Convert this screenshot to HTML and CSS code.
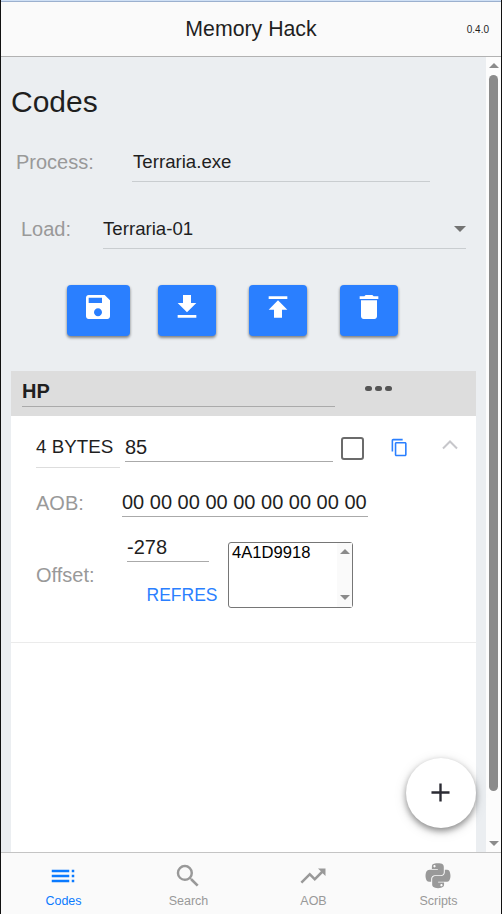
FILE: index.html
```html
<!DOCTYPE html>
<html lang="en">
<head>
<meta charset="utf-8">
<title>Memory Hack</title>
<link rel="stylesheet" href="styles.css">
</head>
<body>
<div class="app">
  <header class="toolbar">
    <span></span>
    <span class="title">Memory Hack</span>
    <span class="version">0.4.0</span>
  </header>
  <div class="viewport">
    <main class="content">
      <h1>Codes</h1>
      <div class="row process">
        <span class="label">Process:</span>
        <div class="field">Terraria.exe</div>
      </div>
      <div class="row load">
        <span class="label">Load:</span>
        <div class="field">Terraria-01<i class="caret"></i></div>
      </div>
      <div class="actions">
        <button class="action wide"><svg viewBox="0 0 24 24"><path d="M17 3H5c-1.11 0-2 .9-2 2v14c0 1.1.89 2 2 2h14c1.1 0 2-.9 2-2V7l-4-4zm-5 16c-1.66 0-3-1.34-3-3s1.34-3 3-3 3 1.34 3 3-1.34 3-3 3zm3-10H5V5h10v4z"/></svg></button>
        <button class="action"><svg viewBox="0 0 24 24"><path d="M19 9h-4V3H9v6H5l7 7 7-7zM5 18v2h14v-2H5z"/></svg></button>
        <button class="action"><svg viewBox="0 0 24 24"><path d="M5 4v2h14V4H5zm0 10h4v6h6v-6h4l-7-7-7 7z"/></svg></button>
        <button class="action"><svg viewBox="0 0 24 24"><path d="M6 19c0 1.100.9 2 2 2h8c1.100 0 2-.9 2-2V7H6v12zM19 4h-3.500l-1-1h-5l-1 1H5v2h14V4z"/></svg></button>
      </div>
      <section class="card">
        <div class="card-head">
          <div class="name">HP</div>
          <div class="dots"><i></i><i></i><i></i></div>
        </div>
        <div class="card-body">
          <div class="value-row">
            <div class="type">4 BYTES</div>
            <div class="value">85</div>
            <span class="check"></span>
            <svg class="copy" viewBox="0 0 24 24"><path d="M16 1H4c-1.100 0-2 .9-2 2v14h2V3h12V1zm3 4H8c-1.100 0-2 .9-2 2v14c0 1.100.9 2 2 2h11c1.100 0 2-.9 2-2V7c0-1.100-.9-2-2-2zm0 16H8V7h11v14z"/></svg>
            <svg class="chevron" viewBox="0 0 16 10"><path d="M1 8.500L8 1.500l7 7"/></svg>
          </div>
          <div class="aob-row">
            <span class="label">AOB:</span>
            <div class="bytes">00 00 00 00 00 00 00 00 00</div>
          </div>
          <div class="offset-row">
            <span class="label">Offset:</span>
            <div class="offset-edit">
              <div class="offset">-278</div>
              <div class="refresh">REFRES</div>
            </div>
            <div class="listbox">
              <span class="option">4A1D9918</span>
              <div class="list-scroll"><i class="up"></i><i class="down"></i></div>
            </div>
          </div>
        </div>
      </section>
    </main>
    <div class="scrollbar"><i class="up"></i><div class="thumb"></div><i class="down"></i></div>
    <button class="fab"><svg viewBox="0 0 20 20"><path d="M10 .5v19M.5 10h19"/></svg></button>
  </div>
  <nav class="tabs">
    <div class="tab active"><svg viewBox="0 0 24 24"><path d="M3 9h14V7H3v2zm0 4h14v-2H3v2zm0 4h14v-2H3v2zm16 0h2v-2h-2v2zm0-10v2h2V7h-2zm0 6h2v-2h-2v2z"/></svg><span>Codes</span></div>
    <div class="tab"><svg viewBox="0 0 24 24"><path d="M15.500 14h-.79l-.28-.27A6.471 6.471 0 0 0 16 9.500 6.500 6.500 0 1 0 9.500 16c1.610 0 3.090-.59 4.230-1.570l.27.28v.79l5 4.990L20.490 19l-4.990-5zm-6 0C7.010 14 5 11.990 5 9.500S7.010 5 9.500 5 14 7.010 14 9.500 11.990 14 9.500 14z"/></svg><span>Search</span></div>
    <div class="tab"><svg viewBox="0 0 24 24"><path d="M16 6l2.290 2.290-4.880 4.880-4-4L2 16.590 3.410 18l6-6 4 4 6.300-6.290L22 12V6z"/></svg><span>AOB</span></div>
    <div class="tab"><svg viewBox="-45 -9 538 538"><path d="M439.8 200.5c-7.7-30.9-22.3-54.2-53.4-54.2h-40.1v47.4c0 36.8-31.2 67.8-66.800 67.800H172.700c-29.200 0-53.400 25-53.400 54.300v101.800c0 29 25.200 46 53.400 54.300 33.800 9.900 66.300 11.700 106.800 0 26.900-7.800 53.400-23.500 53.400-54.300v-40.700H226.200v-13.600h160.200c31.100 0 42.600-21.700 53.400-54.200 11.200-33.500 10.700-65.700 0-108.600zM286.200 404c11.100 0 20.100 9.100 20.100 20.300 0 11.300-9 20.400-20.100 20.400-11 0-20.100-9.200-20.100-20.400.1-11.300 9.100-20.300 20.100-20.300zM167.800 248.100h106.800c29.700 0 53.400-24.500 53.400-54.300V91.900c0-29-24.400-50.700-53.400-55.600-35.800-5.900-74.700-5.600-106.800.1-45.200 8-53.400 24.700-53.400 55.600v40.700h106.900v13.600h-147c-31.100 0-58.300 18.700-66.800 54.200-9.800 40.700-10.200 66.100 0 108.600 7.600 31.600 25.700 54.200 56.800 54.200H101v-48.800c0-35.300 30.500-66.400 66.800-66.400zm-6.700-142.600c-11.100 0-20.100-9.100-20.100-20.300.1-11.300 9-20.400 20.100-20.400 11 0 20.100 9.200 20.100 20.400s-9 20.300-20.100 20.300z"/></svg><span>Scripts</span></div>
  </nav>
</div>
</body>
</html>
```
FILE: styles.css
```css
* { box-sizing: border-box; }
body {
  margin: 0;
  font-family: "Liberation Sans", Arial, sans-serif;
  font-size: 20px;
  color: #1f1f1f;
  overflow: hidden;
}
svg { display: block; fill: currentColor; }
button { border: 0; padding: 0; font: inherit; }
.app {
  height: 914px;
  display: flex;
  flex-direction: column;
  background: #fafafa;
  border-left: 1px solid #111;
  border-right: 1px solid #111;
}
.toolbar {
  height: 57px;
  flex: none;
  display: grid;
  grid-template-columns: 1fr auto 1fr;
  border-top: 1px solid #cfe0f5;
  border-bottom: 1px solid #b2b2b2;
  box-shadow: inset 0 1px #9bb0ce;
  line-height: 57px;
}
.title { font-size: 21.3px; }
.version {
  font-size: 10px;
  text-align: right;
  padding-right: 12px;
}
.viewport {
  height: 795px;
  flex: none;
  display: flex;
  position: relative;
}
.content {
  width: 485px;
  padding: 25px 10px 0;
  background: #ebeef1;
  display: flex;
  flex-direction: column;
}
h1 {
  margin: 0;
  font-size: 30px;
  font-weight: 400;
  line-height: 40px;
}
.label { color: #999; }
.row { display: grid; height: 40px; line-height: 40px; }
.row .field {
  display: flex;
  justify-content: space-between;
  align-items: center;
  font-size: 18.67px;
  line-height: 38px;
  border-bottom: 1px solid #c9cdd0;
}
.process {
  margin: 20px 46px 0 5px;
  grid-template-columns: 116px 1fr;
}
.process .field { padding-left: 1px; }
.load {
  margin: 27px 10px 0 10px;
  grid-template-columns: 82px 1fr;
}
.load .field { padding-top: 1px; }
.caret {
  border: 6.5px solid transparent;
  border-top: 6px solid #737373;
  border-bottom: 0;
}
.actions {
  display: flex;
  gap: 33px;
  margin: 36px 0 35px 56px;
}
.action {
  width: 58px;
  height: 51px;
  padding: 6px 1px 13px 0;
  display: flex;
  justify-content: center;
  color: #fff;
  background: #2a7fff;
  border-radius: 4px;
  box-shadow: 0 2px 3px rgba(0,0,0,.35), 0 1px 3px rgba(0,0,0,.2);
}
.action.wide { width: 63px; margin-right: -5px; }
.action svg { width: 32px; height: 32px; }
.card { flex: 1; background: #fff; }
.card-head {
  height: 45px;
  padding-left: 11px;
  display: flex;
  background: #ddd;
}
.name {
  width: 313px;
  height: 36px;
  line-height: 40px;
  font-weight: 700;
  border-bottom: 1px solid #aaa;
}
.dots { display: flex; gap: 3px; margin: 15px 0 0 30px; }
.dots i { width: 7px; height: 5px; border-radius: 2.5px; background: #555; }
.card-body {
  height: 227px;
  padding-left: 25px;
  border-bottom: 1px solid #ebebeb;
}
.value-row { display: flex; height: 62px; }
.type {
  width: 84px;
  height: 52px;
  font-size: 18.8px;
  line-height: 62px;
  white-space: nowrap;
  border-bottom: 1px solid #ddd;
}
.value {
  width: 208px;
  height: 46px;
  margin-left: 5px;
  line-height: 62px;
  border-bottom: 1px solid #aaa;
}
.check {
  width: 23px;
  height: 23px;
  margin: 21px 0 0 8px;
  border: 2px solid #6b6b6b;
  border-radius: 3px;
}
.copy { width: 19px; height: 19px; margin: 22px 0 0 25.5px; color: #2a7fff; }
.chevron {
  width: 16px;
  height: 10px;
  margin: 24px 0 0 33px;
  fill: none;
  stroke: #c7c7cb;
  stroke-width: 2;
}
.aob-row { display: flex; height: 60px; }
.aob-row .label { width: 86px; line-height: 50px; }
.bytes {
  width: 246px;
  height: 39px;
  line-height: 48px;
  white-space: nowrap;
  border-bottom: 1px solid #aaa;
}
.offset-row { display: flex; }
.offset-row .label { width: 91px; line-height: 74px; }
.offset-edit { width: 101px; }
.offset {
  width: 82px;
  height: 24px;
  line-height: 18px;
  border-bottom: 1px solid #aaa;
}
.refresh {
  margin: 18px 0 0 19.5px;
  font-size: 17.5px;
  line-height: 30px;
  color: #2a7fff;
}
.listbox {
  width: 125px;
  height: 66px;
  margin-top: 4px;
  padding-left: 3px;
  display: flex;
  justify-content: space-between;
  border: 1px solid #767676;
  border-radius: 3px;
}
.option { font-size: 16.6px; line-height: 19px; color: #000; }
.list-scroll {
  width: 15px;
  padding: 6px 0 7px;
  display: flex;
  flex-direction: column;
  align-items: center;
  justify-content: space-between;
  background: #fafafa;
}
.up, .down { border: 5px solid transparent; }
.up { border-top: 0; border-bottom-color: #8b8b8b; }
.down { border-bottom: 0; border-top-color: #8b8b8b; }
.scrollbar {
  width: 15px;
  padding: 6px 0;
  display: flex;
  flex-direction: column;
  align-items: center;
  background: #fcfcfc;
}
.thumb {
  width: 9px;
  height: 716px;
  margin: 7px 0 auto;
  border-radius: 5px;
  background: #8b8b8b;
}
.fab {
  position: absolute;
  right: 25px;
  bottom: 24px;
  width: 70px;
  height: 70px;
  padding: 0 1px 1px 0;
  display: grid;
  place-items: center;
  border-radius: 50%;
  background: #fff;
  box-shadow: 0 3px 6px rgba(0,0,0,.4), 0 3px 14px rgba(0,0,0,.12);
}
.fab svg { width: 19px; height: 19px; stroke: #2b2b33; stroke-width: 2.5; }
.tabs {
  height: 62px;
  flex: none;
  display: grid;
  grid-template-columns: repeat(4, 1fr);
  border-top: 1px solid #c4c4c4;
}
.tab {
  display: flex;
  flex-direction: column;
  align-items: center;
  padding-top: 8px;
  font-size: 12.5px;
  line-height: 20px;
  color: #999;
}
.tab svg { width: 30px; height: 30px; margin-right: 1px; }
.active { color: #0a7aff; }
```
